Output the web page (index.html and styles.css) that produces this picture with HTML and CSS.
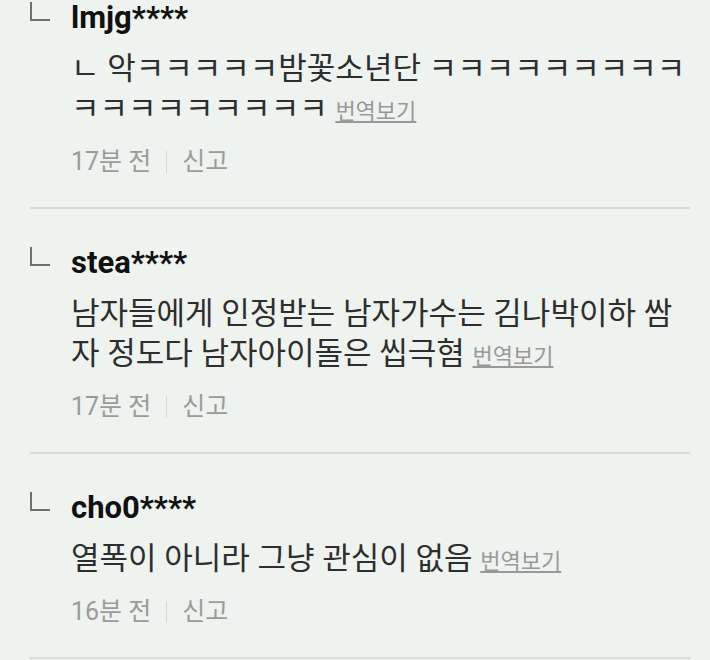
FILE: index.html
```html
<!DOCTYPE html>
<html lang="ko">
  <head>
    <meta charset="UTF-8">
    <meta name="viewport" content="width=device-width, initial-scale=1.0">
    <title>댓글</title>
    <link rel="stylesheet" href="styles.css">
  </head>
  <body>
    <ul class="replies">
      <li class="reply">
        <span class="reply-mark"></span>
        <div class="reply-body">
          <div class="nick">lmjg****</div>
          <p class="text">ㄴ 악ㅋㅋㅋㅋㅋ밤꽃소년단 ㅋㅋㅋㅋㅋㅋㅋㅋㅋㅋㅋㅋㅋㅋㅋㅋㅋㅋ <a class="translate" href="#">번역보기</a></p>
          <div class="meta"><span>17분 전</span><span class="bar"></span><a href="#">신고</a></div>
        </div>
      </li>
      <li class="reply">
        <span class="reply-mark"></span>
        <div class="reply-body">
          <div class="nick">stea****</div>
          <p class="text">남자들에게 인정받는 남자가수는 김나박이하 쌈자 정도다 남자아이돌은 씹극혐 <a class="translate" href="#">번역보기</a></p>
          <div class="meta"><span>17분 전</span><span class="bar"></span><a href="#">신고</a></div>
        </div>
      </li>
      <li class="reply">
        <span class="reply-mark"></span>
        <div class="reply-body">
          <div class="nick">cho0****</div>
          <p class="text">열폭이 아니라 그냥 관심이 없음 <a class="translate" href="#">번역보기</a></p>
          <div class="meta"><span>16분 전</span><span class="bar"></span><a href="#">신고</a></div>
        </div>
      </li>
    </ul>
  </body>
</html>
```

FILE: styles.css
```css
body {
  margin: 0;
  background-color: #eff3ef;
  font-family: Roboto, "Noto Sans CJK KR", sans-serif;
  overflow: hidden;
}
.replies {
  list-style: none;
  margin: -36px 20px 0 30px;
  padding: 0;
}
.reply {
  display: flex;
  padding: 36px 0 30px;
  border-bottom: 2px solid #d9ddd9;
}
.reply-mark {
  flex: none;
  box-sizing: border-box;
  width: 20px;
  height: 19px;
  margin: 2px 21px 0 0;
  border-left: 2px solid #6e706e;
  border-bottom: 2px solid #6e706e;
}
.reply-body { flex: 1; min-width: 0; }
.nick {
  font-size: 31px;
  font-weight: bold;
  line-height: 36px;
  color: #111;
}
.text {
  margin: 13px 0 0;
  font-size: 31px;
  line-height: 40px;
  color: #2e2e2e;
}
.translate {
  font-size: 22px;
  line-height: 20px;
  color: #999;
  text-decoration: underline;
}
.meta {
  display: flex;
  align-items: center;
  margin-top: 18px;
  font-size: 25px;
  line-height: 30px;
  color: #9a9c9a;
}
.meta a { color: #9a9c9a; text-decoration: none; }
.bar {
  width: 1px;
  height: 22px;
  margin: 0 15px;
  background-color: #d5d8d5;
}
```
